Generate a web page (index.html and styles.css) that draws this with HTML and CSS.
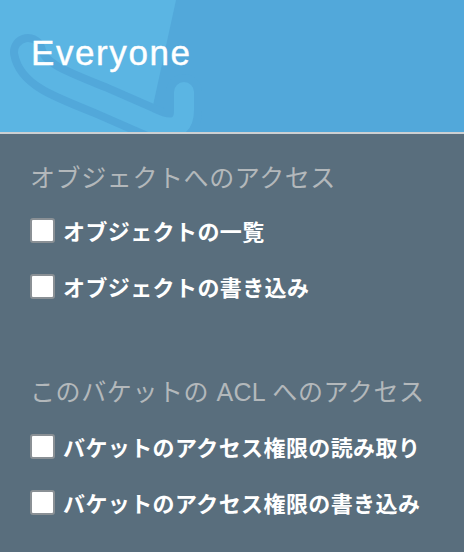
FILE: index.html
```html
<!DOCTYPE html>
<html lang="ja">
<head>
<meta charset="utf-8">
<link rel="stylesheet" href="styles.css">
</head>
<body>
<div class="panel">
  <header class="head">
    <svg class="head-art" width="464" height="132" viewBox="0 0 464 132" aria-hidden="true">
      <rect x="0" y="0" width="464" height="132" fill="#52a8da"/>
      <polygon points="0,0 176,0 152,110 140,132 0,132" fill="#5bb5e3"/>
      <path d="M28 52 C32 74, 60 84, 100 100 L148 121 Q184 138 184 110 L184 92" fill="none" stroke="#52a8da" stroke-width="36" stroke-linecap="round" stroke-linejoin="round"/>
      <path d="M28 52 C32 74, 60 84, 100 100 L148 121 Q184 138 184 110 L184 92" fill="none" stroke="#5bb5e3" stroke-width="20" stroke-linecap="round" stroke-linejoin="round"/>
    </svg>
    <h1 class="title">Everyone</h1>
  </header>
  <main class="body">
    <section class="group">
      <h2 class="group-title">オブジェクトへのアクセス</h2>
      <label class="item"><span class="box"></span><span class="label">オブジェクトの一覧</span></label>
      <label class="item"><span class="box"></span><span class="label">オブジェクトの書き込み</span></label>
    </section>
    <section class="group">
      <h2 class="group-title">このバケットの<span class="latin"> ACL </span>へのアクセス</h2>
      <label class="item"><span class="box"></span><span class="label">バケットのアクセス権限の読み取り</span></label>
      <label class="item"><span class="box"></span><span class="label">バケットのアクセス権限の書き込み</span></label>
    </section>
  </main>
</div>
</body>
</html>
```

FILE: styles.css
```css
html, body {
  margin: 0;
  padding: 0;
}
body {
  width: 464px;
  height: 552px;
  overflow: hidden;
  background: #596e7d;
  font-family: "Noto Sans CJK JP", "Noto Sans", sans-serif;
}
.panel {
  display: flex;
  flex-direction: column;
}
.head {
  position: relative;
  height: 132px;
  border-bottom: 2px solid #cdd0d2;
  overflow: hidden;
}
.head-art {
  position: absolute;
  left: 0;
  top: 0;
}
.title {
  position: relative;
  margin: 0;
  padding: 33px 0 0 31px;
  font-family: "Liberation Sans", Arial, sans-serif;
  font-weight: 400;
  font-size: 35px;
  line-height: 40px;
  letter-spacing: 1.6px;
  color: #ffffff;
  -webkit-text-stroke: 0.4px #ffffff;
}
.body {
  display: flex;
  flex-direction: column;
  gap: 58px;
  padding: 24px 0 0 30px;
}
.group {
  display: flex;
  flex-direction: column;
}
.group-title {
  margin: 0 0 8px 0;
  font-size: 25px;
  line-height: 36px;
  font-weight: 400;
  letter-spacing: 0.6px;
  color: #b3b8bb;
}
.latin {
  font-family: "Liberation Sans", Arial, sans-serif;
  letter-spacing: 0.3px;
}
.item {
  display: flex;
  align-items: center;
  gap: 8px;
  height: 56px;
}
.box {
  box-sizing: border-box;
  width: 25px;
  height: 25px;
  flex: none;
  background: #ffffff;
  border: 2px solid #8a9095;
  border-radius: 3px;
}
.label {
  font-size: 22px;
  line-height: 30px;
  font-weight: 700;
  letter-spacing: 0.4px;
  color: #ffffff;
}
```
